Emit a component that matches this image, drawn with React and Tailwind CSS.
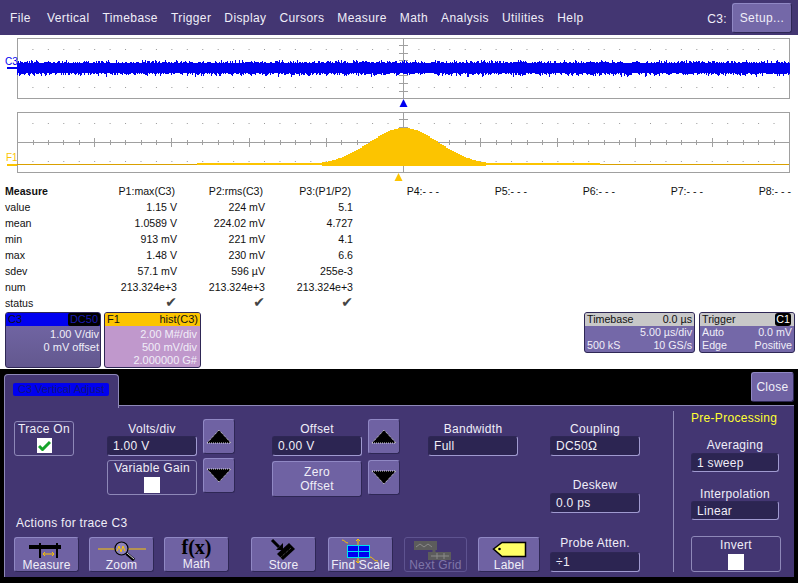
import clsx from 'clsx'

/* ── Waveform data ────────────────────────────────────────────────────── */

function rng(seed) {
  let s = seed
  return () => {
    s = (s * 16807) % 2147483647
    return s / 2147483647
  }
}

function noisePath() {
  const r = rng(4711)
  let d = ''
  for (let x = 17; x <= 789; x++) {
    const top = 63 - r() * r() * 3.5
    const bottom = 73 + r() * r() * 4.5
    d += `M${x}.5 ${top.toFixed(0)}V${bottom.toFixed(0)}`
  }
  return d
}

function histPath() {
  let d = 'M322 166'
  for (let x = 322; x <= 484; x += 2) {
    const h = 37 * Math.exp(-((x - 403) ** 2) / (2 * 35 * 35))
    d += `V${Math.round(165 - h)}H${x + 2}`
  }
  return d + 'V166Z'
}

const NOISE = noisePath()
const HIST = histPath()
const range = (from, step, count) => Array.from({ length: count }, (_, i) => from + i * step)

/* ── Scope grids ──────────────────────────────────────────────────────── */

function Grid({ top, axis }) {
  const xs = range(32.4, 15.44, 49).filter((x) => Math.abs(x - 403.5) > 3)
  return (
    <g>
      {xs.map((x) => (
        <g key={x}>
          <rect x={x} y={top + 11} width="1" height="1" fill="#999" />
          <rect x={x} y={top + 49} width="1" height="1" fill="#999" />
        </g>
      ))}
      <rect x="17.5" y={top + 0.5} width="772" height="60" fill="none" stroke="#a0a0a0" />
      <path d={`M403.5 ${top}V${top + 60}`} stroke="#a0a0a0" />
      {range(top + 7, 7.6, 7).map((y) => (
        <path key={y} d={`M399 ${Math.round(y)}.5H408`} stroke="#a0a0a0" />
      ))}
      {axis && (
        <g stroke="#a0a0a0">
          <path d={`M17 ${top + 30}.5H789`} />
          {range(32.5, 15.44, 49).map((x, i) => {
            const long = (i + 1) % 5 === 0
            return (
              <path
                key={x}
                d={`M${Math.round(x)}.5 ${top + (long ? 26 : 28)}V${top + (long ? 35 : 33)}`}
              />
            )
          })}
        </g>
      )}
    </g>
  )
}

function Scope() {
  return (
    <svg width="798" height="148" viewBox="0 35 798 148" className="block shrink-0">
      <Grid top={38} axis />
      <path d={NOISE} stroke="#0000f0" strokeWidth="1" fill="none" />
      <text x="5" y="65" fontSize="10" fill="#0000f0" fontFamily="Liberation Sans">C3</text>
      <rect x="7" y="67" width="10" height="2" fill="#0000f0" />
      <polygon points="403.5,99 407.5,107 399.5,107" fill="#0000f0" />

      <Grid top={112} axis />
      <path d="M17 164.5H322M484 164.5H789" stroke="#d9a000" strokeWidth="1" fill="none" />
      <rect x="197" y="163" width="125" height="2" fill="#fcc400" />
      <rect x="476" y="163" width="124" height="2" fill="#fcc400" />
      <path d={HIST} fill="#fcc400" />
      <text x="6" y="161" fontSize="10" fill="#fcc400" fontFamily="Liberation Sans">F1</text>
      <rect x="7" y="164" width="10" height="2" fill="#fcc400" />
      <polygon points="398.5,173 402.5,181 394.5,181" fill="#fcc400" />
    </svg>
  )
}

/* ── Measure table ────────────────────────────────────────────────────── */

const HEADERS = ['P1:max(C3)', 'P2:rms(C3)', 'P3:(P1/P2)', 'P4:- - -', 'P5:- - -', 'P6:- - -', 'P7:- - -', 'P8:- - -']

const ROWS = [
  ['value', '1.15 V', '224 mV', '5.1'],
  ['mean', '1.0589 V', '224.02 mV', '4.727'],
  ['min', '913 mV', '221 mV', '4.1'],
  ['max', '1.48 V', '230 mV', '6.6'],
  ['sdev', '57.1 mV', '596 µV', '255e-3'],
  ['num', '213.324e+3', '213.324e+3', '213.324e+3'],
]

function MeasureTable() {
  return (
    <div className="grid grid-cols-[84px_repeat(8,88px)] auto-rows-[16px] pl-[5px] text-[10.6px] leading-4 text-[#111] shrink-0">
      <div className="font-bold">Measure</div>
      {HEADERS.map((h) => (
        <div key={h} className="text-right pr-0.5">{h}</div>
      ))}
      {ROWS.map((row) => (
        <div key={row[0]} className="contents">
          <div>{row[0]}</div>
          {row.slice(1).map((v, i) => (
            <div key={i} className="text-right">{v}</div>
          ))}
          <div className="col-span-5" />
        </div>
      ))}
      <div>status</div>
      {[0, 1, 2].map((i) => (
        <div key={i} className="text-right text-[#444] font-['DejaVu_Sans',sans-serif] text-[14px] leading-[15px]">✔</div>
      ))}
    </div>
  )
}

/* ── Trace / timebase tiles ───────────────────────────────────────────── */

function TileRow() {
  return (
    <div className="flex items-start pl-[5px] pr-[3px] pt-px h-[58px] text-[10.7px] leading-[13px] text-[#f0eef8] shrink-0">
      <div className="w-[96px] h-[56px] rounded-[3px] border border-[#2e2755] bg-gradient-to-b from-[#7468a8] to-[#63588f] text-[11px]">
        <div className="flex justify-between h-[13px] bg-[#0000f0] rounded-t-[2px] pl-0.5 text-[#111]">
          <span>C3</span>
          <span className="bg-black text-[#1a1ab0] rounded-[2px] px-0.5">DC50</span>
        </div>
        <div className="mt-[2px] text-right pr-px">1.00 V/div</div>
        <div className="text-right pr-px">0 mV offset</div>
      </div>
      <div className="ml-[3px] w-[97px] h-[56px] rounded-[3px] border border-[#2e2755] bg-[#c098cc] text-[11px]">
        <div className="flex justify-between h-[13px] bg-[#fcc400] rounded-t-[2px] px-0.5 text-[#111]">
          <span>F1</span>
          <span>hist(C3)</span>
        </div>
        <div className="mt-[2px] text-right pr-[3px]">2.00 M#/div</div>
        <div className="text-right pr-[3px]">500 mV/div</div>
        <div className="text-right pr-[3px]">2.000000 G#</div>
      </div>

      <div className="ml-auto w-[111px] h-[41px] rounded-[3px] border border-[#2e2755] bg-[#7468a8]">
        <div className="flex justify-between h-[13px] bg-[#c8c8c8] rounded-t-[2px] px-0.5 text-[#111]">
          <span>Timebase</span>
          <span>0.0 µs</span>
        </div>
        <div className="text-right pr-0.5">5.00 µs/div</div>
        <div className="flex justify-between px-0.5">
          <span>500 kS</span>
          <span>10 GS/s</span>
        </div>
      </div>
      <div className="ml-1 w-[96px] h-[41px] rounded-[3px] border border-[#2e2755] bg-[#7468a8]">
        <div className="flex justify-between h-[13px] bg-[#c8c8c8] rounded-t-[2px] pl-0.5 text-[#111]">
          <span>Trigger</span>
          <span className="bg-black text-white rounded-[3px] px-px mr-[3px]">C1</span>
        </div>
        <div className="flex justify-between px-0.5">
          <span>Auto</span>
          <span>0.0 mV</span>
        </div>
        <div className="flex justify-between px-0.5">
          <span>Edge</span>
          <span>Positive</span>
        </div>
      </div>
    </div>
  )
}

/* ── Panel widgets ────────────────────────────────────────────────────── */

const BTN = 'rounded-[3px] border border-t-[#9088c4] border-l-[#9088c4] border-b-[#2e2755] border-r-[#2e2755] bg-[#6f62a3]'

function Label({ className, children }) {
  return <div className={clsx('text-center leading-3 h-3', className)}>{children}</div>
}

function Field({ value, className }) {
  return (
    <div
      className={clsx(
        'h-5 flex items-center rounded-[3px] border border-r-[#a09ad0] border-b-[#a09ad0] border-t-[#2e2755] border-l-[#2e2755] bg-[#2c2552] pl-[5px]',
        className,
      )}
    >
      {value}
    </div>
  )
}

function Arrow({ down, className }) {
  return (
    <div className={clsx(BTN, 'w-8 h-[35px] flex items-center justify-center', className)}>
      <svg width="26" height="15" viewBox="0 0 26 15">
        <polygon
          points={down ? '1,1 25,1 13,14' : '1,14 25,14 13,1'}
          fill="#000"
          stroke="#ddd"
          strokeWidth="1"
          strokeDasharray="1 1"
        />
      </svg>
    </div>
  )
}

function Check({ on, size = 'w-4 h-4', className }) {
  return (
    <div className={clsx(size, 'bg-white flex items-center justify-center', className)}>
      {on && (
        <svg width="13" height="11" viewBox="0 0 13 11">
          <path d="M1 6l3.5 3.5L12 2" fill="none" stroke="#16a329" strokeWidth="3" />
        </svg>
      )}
    </div>
  )
}

function ActionButton({ label, className, muted, children }) {
  return (
    <button
      className={clsx(
        'relative h-[35px] block tracking-[0.2px]',
        muted ? 'rounded-[3px] border border-[#5e5390] text-[#7f75a8]' : BTN,
        className,
      )}
    >
      <div className="h-[21px] overflow-visible">{children}</div>
      <div className="leading-3 text-center">{label}</div>
    </button>
  )
}

/* ── Action icons ─────────────────────────────────────────────────────── */

const iconProps = { className: 'block overflow-visible -mt-px -ml-px', height: 22 }

const MeasureIcon = () => (
  <svg {...iconProps} width="65" viewBox="0 0 65 22">
    <rect x="15" y="7" width="32" height="4" fill="#000" />
    <rect x="25" y="5" width="2" height="15" fill="#000" />
    <rect x="42" y="5" width="2" height="15" fill="#000" />
    <path d="M29 16H40M31 14l-2 2 2 2M38 14l2 2-2 2" stroke="#fcc400" fill="none" />
  </svg>
)

const ZoomIcon = () => (
  <svg {...iconProps} width="65" viewBox="0 0 65 22">
    <path d="M9 11H26M39 11H57" stroke="#fcc400" />
    <circle cx="32.5" cy="10.5" r="6.5" fill="#8d82b8" stroke="#000" strokeWidth="1.2" />
    <path d="M28 13l2-5 2 6 2-6 2 5" stroke="#fcc400" fill="none" />
    <path d="M37.5 15.5L45 22" stroke="#000" strokeWidth="3" />
    <path d="M38 15L45 21" stroke="#ddd" strokeWidth="1" />
  </svg>
)

const StoreIcon = () => (
  <svg {...iconProps} width="65" viewBox="0 0 65 22">
    <path d="M21 2l7 7" stroke="#000" strokeWidth="3" />
    <polygon points="32,12 32,5 25,12" fill="#000" />
    <polygon points="26,16 38,5 44,11 32,22" fill="#000" />
    <path d="M29 20l11-10" stroke="#666" strokeDasharray="1 1" />
  </svg>
)

const FindScaleIcon = () => (
  <svg {...iconProps} width="65" viewBox="0 0 65 22">
    <path d="M14 2c3 0 3 3 6 3M42 19c3 0 3 4 8 4" stroke="#fcc400" fill="none" />
    <path d="M30 1V7M28 3l2-2 2 2M30 19V25M28 23l2 2 2-2" stroke="#fcc400" fill="none" />
    <rect x="19.5" y="7.5" width="22" height="12" fill="#0000f0" stroke="#00e0f0" />
    <path d="M19 13.5H41M30.5 7V19" stroke="#00e0f0" />
  </svg>
)

const NextGridIcon = () => (
  <svg {...iconProps} width="63" viewBox="0 0 63 22">
    <rect x="10" y="3" width="23" height="9" fill="#5c5c5c" />
    <rect x="24" y="14" width="23" height="8" fill="#5c5c5c" />
    <path d="M12 9l4-3 4 3 4-3 4 3M27 18H45M33 15v6M40 15v6" stroke="#8a8a8a" fill="none" />
    <path d="M30 12v3" stroke="#5c5c5c" strokeWidth="3" />
  </svg>
)

const LabelIcon = () => (
  <svg {...iconProps} width="62" viewBox="0 0 62 22">
    <polygon points="15.5,11 24,4.5 47.5,4.5 47.5,18.5 24,18.5" fill="#ffff66" stroke="#000" strokeWidth="1.5" />
    <circle cx="21.5" cy="11" r="1.3" fill="#000" />
  </svg>
)

/* ── Vertical adjust panel ────────────────────────────────────────────── */

function VerticalPanel() {
  return (
    <div className="flex-1 min-h-0 bg-black pt-[3px] pb-[6px] px-1 flex flex-col font-['Liberation_Sans',sans-serif] text-[12px] tracking-[0.3px] text-[#f0eef8]">
      <div className="flex justify-between h-[33px] shrink-0">
        <div className="w-[115px] h-[34px] mt-[2px] rounded-t-[4px] border border-b-0 border-[#8e88b8] bg-[#433672] relative z-10 pt-2 pl-2">
          <div className="w-[96px] h-[13px] bg-[#0000f0] rounded-[2px] text-[11px] tracking-normal leading-[13px] text-[#11157a] pl-[5px] whitespace-nowrap">
            C3 Vertical Adjust
          </div>
        </div>
        <button className={clsx(BTN, 'w-[43px] h-[30px] mr-0')}>Close</button>
      </div>

      <div className="flex-1 min-h-0 flex border-t border-l border-[#8e88b8] bg-[#433672] pl-[9px]">
        <div className="w-[526px] flex flex-col pb-[5px]">
          <div className="flex items-start">
            <div className="mt-[15px] w-[60px] h-[35px] rounded-[3px] border border-[#8e88b8] flex flex-col items-center pt-[1px]">
              <Label>Trace On</Label>
              <Check on size="w-[15px] h-[15px]" className="mt-[3px]" />
            </div>

            <div className="ml-[33px] mt-[17px] w-[90px]">
              <Label>Volts/div</Label>
              <Field value="1.00 V" className="mt-px" />
              <div className="mt-1 h-[35px] rounded-[3px] border border-[#8e88b8] flex flex-col items-center pt-px">
                <Label>Variable Gain</Label>
                <Check className="mt-[3px]" />
              </div>
            </div>
            <div className="ml-[6px] mt-[13px] w-8">
              <Arrow />
              <Arrow down className="mt-1" />
            </div>

            <div className="ml-[37px] mt-[17px] w-[90px]">
              <Label>Offset</Label>
              <Field value="0.00 V" className="mt-px" />
              <div className={clsx(BTN, 'mt-[5px] h-[36px] flex flex-col items-center justify-center leading-[14px]')}>
                <span>Zero</span>
                <span>Offset</span>
              </div>
            </div>
            <div className="ml-[6px] mt-[13px] w-8">
              <Arrow />
              <Arrow down className="mt-[6px]" />
            </div>

            <div className="ml-[28px] mt-[17px] w-[90px]">
              <Label>Bandwidth</Label>
              <Field value="Full" className="mt-px" />
            </div>
          </div>

          <div className="mt-auto pl-0.5 leading-3">Actions for trace C3</div>
          <div className="mt-2 flex items-start">
            <ActionButton label="Measure" className="w-[65px]"><MeasureIcon /></ActionButton>
            <ActionButton label="Zoom" className="ml-[10px] w-[65px]"><ZoomIcon /></ActionButton>
            <ActionButton label="Math" className="ml-[10px] w-[65px]">
              <div className="font-['Liberation_Serif',serif] font-bold text-[20px] leading-[20px] text-black tracking-normal -mt-[3px]">f(x)</div>
            </ActionButton>
            <ActionButton label="Store" className="ml-[22px] w-[65px]"><StoreIcon /></ActionButton>
            <ActionButton label="Find Scale" className="ml-3 w-[65px]"><FindScaleIcon /></ActionButton>
            <ActionButton label="Next Grid" muted className="ml-[11px] w-[63px]"><NextGridIcon /></ActionButton>
            <ActionButton label="Label" className="ml-[11px] w-[62px]"><LabelIcon /></ActionButton>
          </div>
        </div>

        <div className="ml-[10px] w-[90px]">
          <Label className="mt-[17px]">Coupling</Label>
          <Field value="DC50Ω" className="mt-px" />
          <Label className="mt-[23px]">Deskew</Label>
          <Field value="0.0 ps" className="mt-0.5" />
          <Label className="mt-[24px]">Probe Atten.</Label>
          <Field value="÷1" className="mt-[3px]" />
        </div>

        <div className="ml-[33px] my-[5px] w-px bg-[#8e88b8]" />

        <div className="ml-[17px] w-[90px]">
          <Label className="mt-[6px] text-[#ffff33] pr-[10px] whitespace-nowrap">Pre-Processing</Label>
          <Label className="mt-[15px] pr-0.5">Averaging</Label>
          <Field value="1 sweep" className="mt-0.5 w-[88px] h-[19px]" />
          <Label className="mt-4 pr-0.5">Interpolation</Label>
          <Field value="Linear" className="mt-px w-[88px] h-[19px]" />
          <div className="mt-4 h-[36px] rounded-[3px] border border-[#8e88b8] flex flex-col items-center pt-[2px]">
            <Label>Invert</Label>
            <Check className="mt-[3px]" />
          </div>
        </div>
      </div>
    </div>
  )
}

/* ── Top menu ─────────────────────────────────────────────────────────── */

const MENU = ['Vertical', 'Timebase', 'Trigger', 'Display', 'Cursors', 'Measure', 'Math', 'Analysis', 'Utilities', 'Help']

function MenuBar() {
  return (
    <div className="h-[35px] shrink-0 bg-[#433672] flex items-center pl-[10px] pr-[6px] text-[12px] tracking-[0.4px] text-[#f0eef8]">
      <span className="mr-[16px]">File</span>
      <div className="flex gap-[13px]">
        {MENU.map((m) => (
          <span key={m}>{m}</span>
        ))}
      </div>
      <span className="ml-auto mr-[5px] mt-0.5">C3:</span>
      <button className={clsx(BTN, 'w-[60px] h-[30px] bg-[#7468a8]')}>Setup...</button>
    </div>
  )
}

export default function App() {
  return (
    <div className="w-[798px] h-[583px] overflow-hidden bg-white flex flex-col font-['Liberation_Sans',sans-serif]">
      <MenuBar />
      <Scope />
      <MeasureTable />
      <TileRow />
      <VerticalPanel />
    </div>
  )
}
